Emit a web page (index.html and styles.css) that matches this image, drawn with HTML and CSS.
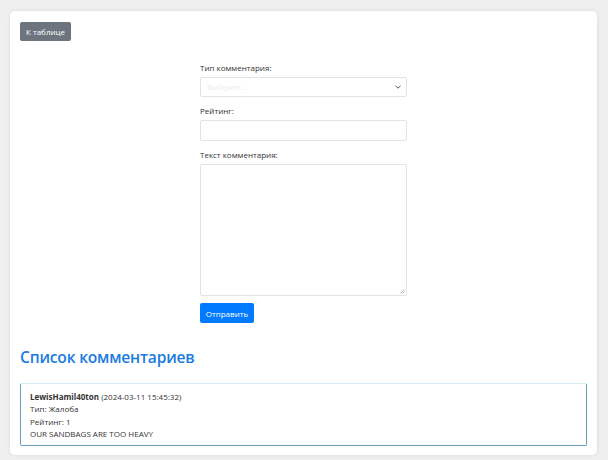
FILE: index.html
```html
<!DOCTYPE html>
<html lang="ru">
<head>
<meta charset="utf-8">
<title>Комментарии</title>
<link rel="stylesheet" href="styles.css">
</head>
<body>
<div class="card">
  <div class="top-row">
    <a class="btn btn-secondary" href="#">К таблице</a>
  </div>
  <form class="comment-form">
    <div class="group">
      <label class="lbl">Тип комментария:</label>
      <div class="select">
        <span class="placeholder">Выберите...</span>
        <svg class="chev" width="6" height="4" viewBox="0 0 6 4"><path d="M0.5 0.8 L3 3.2 L5.5 0.8" fill="none" stroke="#555" stroke-width="1"/></svg>
      </div>
    </div>
    <div class="group">
      <label class="lbl">Рейтинг:</label>
      <div class="input"></div>
    </div>
    <div class="group last">
      <label class="lbl">Текст комментария:</label>
      <div class="textarea">
        <svg class="grip" width="5" height="5" viewBox="0 0 5 5"><path d="M4.5 0.5 L0.5 4.5 M4.5 2.5 L2.5 4.5" stroke="#999" stroke-width="0.8"/></svg>
      </div>
    </div>
    <button class="btn btn-primary" type="button">Отправить</button>
  </form>
  <h2 class="heading">Список комментариев</h2>
  <div class="comment">
    <div class="line"><b>LewisHamil40ton</b> (2024-03-11 15:45:32)</div>
    <div class="line">Тип: Жалоба</div>
    <div class="line">Рейтинг: 1</div>
    <div class="line">OUR SANDBAGS ARE TOO HEAVY</div>
  </div>
</div>
</body>
</html>
```
FILE: styles.css
```css
* { box-sizing: border-box; }
html, body { margin: 0; padding: 0; }
body {
  background: #efefef;
  font-family: "Open Sans", "Noto Sans", sans-serif;
  font-size: 8px;
  color: #333;
  padding: 11px 11px 0 10px;
  height: 460px;
  overflow: hidden;
}
.card {
  background: #fff;
  border-radius: 5px;
  box-shadow: 0 0 4px rgba(0,0,0,0.08);
  padding: 11px 10px 8px 10px;
  height: 444px;
}
.top-row { display: flex; }
.btn {
  display: inline-flex;
  align-items: center;
  justify-content: center;
  border: none;
  border-radius: 2px;
  color: #fff;
  font-family: inherit;
  font-size: 8px;
  white-space: nowrap;
  text-decoration: none;
  height: 19px;
  padding: 0 4px;
}
.btn-secondary { background: #6c757d; width: 51px; }
.btn-primary { background: #007bff; width: 54px; height: 20px; margin-top: 7px; }
.comment-form {
  width: 207px;
  margin: 21px auto 0;
  display: flex;
  flex-direction: column;
  align-items: flex-start;
}
.group { width: 100%; margin-bottom: 8px; }
.group.last { margin-bottom: 0; }
.lbl { display: block; line-height: 12px; margin-bottom: 3px; color: #333; }
.select, .input, .textarea {
  width: 100%;
  border: 1px solid #e3e3e3;
  border-radius: 2px;
  background: #fff;
  position: relative;
}
.select { height: 20px; display: flex; align-items: center; padding: 0 6px; }
.placeholder { color: #ececec; font-size: 7px; flex: 1; }
.chev { margin-right: -1px; }
.input { height: 21px; }
.textarea { height: 132px; }
.grip { position: absolute; right: 1px; bottom: 1px; }
.heading {
  margin: 22px 0 14px;
  font-size: 15.6px;
  letter-spacing: -0.2px;
  font-weight: 600;
  line-height: 24px;
  color: #1a7be0;
}
.comment {
  border: 1px solid #6b9cbc;
  border-top-color: #d3ecf2;
  border-radius: 2px;
  padding: 7px 9px 6px;
  height: 63px;
}
.line { line-height: 12.3px; }
.line b { font-weight: 700; }
```
